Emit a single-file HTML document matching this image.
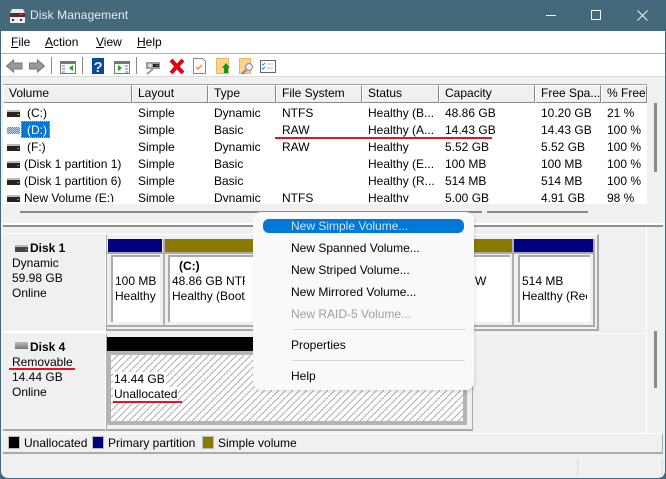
<!DOCTYPE html>
<html><head><meta charset="utf-8"><style>
html,body{margin:0;padding:0;width:666px;height:479px;overflow:hidden;background:#44697a}
*{box-sizing:border-box}
body{font:12px/15px "Liberation Sans",sans-serif;color:#000;position:relative}
.a{position:absolute}
.t{position:absolute;white-space:nowrap;line-height:15px;height:15px}
.h{position:absolute;top:85px;height:18px;background:#f0f0f0;border-left:1px solid #fff;border-right:1px solid #8a8a8a;border-bottom:1px solid #8a8a8a;border-top:1px solid #fff;padding-left:5px;line-height:15px;white-space:nowrap;overflow:hidden}
.red{position:absolute;height:2px;background:#e81123}
.ic{position:absolute;left:7px;width:13px;height:7px;background:linear-gradient(#bbb 0 2px,#2f2020 2px 7px)}
.ic:after{content:"";position:absolute;right:1px;top:4px;width:2px;height:1px;background:#2c2}
.m{position:absolute;left:291px;white-space:nowrap;line-height:15px}
.cell{position:absolute;top:255px;height:67px;background:#fff;border-left:2px solid #aaa;border-top:2px solid #aaa}
</style></head><body>
<div class="a" style="left:1px;top:31px;width:664px;height:447px;background:#f0f0f0;border-radius:0 0 7px 7px"></div>

<!-- title bar -->
<svg class="a" style="left:9px;top:8px" width="18" height="16" viewBox="0 0 18 16">
<path d="M3 1h11l2 4H1z" fill="#e8e8e8"/><rect x="1" y="5" width="15" height="4" fill="#4a3030"/><rect x="10" y="6" width="4" height="1" fill="#e33"/>
<rect x="1" y="9" width="15" height="6" fill="#eee"/><rect x="3" y="11" width="2" height="2" fill="#333"/><rect x="11" y="11" width="2" height="2" fill="#333"/></svg>
<div class="t" style="left:30px;top:8px;color:#dff0f6;font-size:12px;letter-spacing:.1px">Disk Management</div>
<svg class="a" style="left:540px;top:8px" width="118" height="16" fill="none" stroke="#f2f6f8" stroke-width="1">
<path d="M6 7.500h10"/><rect x="51.500" y="2.500" width="9" height="9"/><path d="M97.500 2.500l10 10M107.500 2.500l-10 10"/></svg>

<!-- menu -->
<div class="a" style="left:1px;top:31px;width:664px;height:23px;background:#fff;border-bottom:1px solid #b4b4b4"></div>
<div class="t" style="left:11px;top:35px"><u>F</u>ile</div>
<div class="t" style="left:45px;top:35px"><u>A</u>ction</div>
<div class="t" style="left:96px;top:35px"><u>V</u>iew</div>
<div class="t" style="left:137px;top:35px"><u>H</u>elp</div>

<!-- toolbar -->
<div class="a" style="left:1px;top:54px;width:664px;height:23px;background:#fff;border-bottom:1px solid #dcdcdc"></div>
<svg class="a" style="left:0;top:54px" width="290" height="22">
<path d="M6.500 12l7-6v3h8.500v6h-8.500v3z" fill="#999" stroke="#777"/>
<path d="M44.500 12l-7-6v3h-8v6h8v3z" fill="#999" stroke="#777"/>
<rect x="51" y="3" width="1" height="17" fill="#888"/>
<rect x="60.500" y="7.500" width="15" height="12" fill="#fff" stroke="#777"/><rect x="60" y="7" width="16" height="3" fill="#777"/>
<path d="M62 12h3M62 15h3M62 18h3" stroke="#38c"/><path d="M73 11v6l-4-3z" fill="#1a1"/>
<rect x="82" y="3" width="1" height="17" fill="#888"/>
<rect x="92" y="4" width="12" height="16" fill="#0a4a9a"/>
<text x="93.500" y="18" font-family="Liberation Sans" font-weight="bold" font-size="15" fill="#dfe8f5">?</text>
<rect x="114.500" y="7.500" width="15" height="12" fill="#fff" stroke="#777"/><rect x="114" y="7" width="16" height="3" fill="#777"/>
<path d="M118 11v6l4-3z" fill="#1a1"/><path d="M125 12h3M125 15h3M125 18h3" stroke="#38c"/>
<rect x="136" y="3" width="1" height="17" fill="#888"/>
<path d="M147 20l6-5" stroke="#999" stroke-width="2"/>
<rect x="146" y="8" width="14" height="7" fill="#999"/><rect x="153" y="10" width="6" height="3" fill="#222"/><rect x="156" y="11" width="2" height="1" fill="#2c2"/><circle cx="150" cy="11.500" r="2" fill="#cde"/>
<path d="M171 6l12 13M183 6l-12 13" stroke="#e00012" stroke-width="4"/>
<path d="M193.500 4.500h9l3 3v12h-12z" fill="#fff" stroke="#888"/><path d="M196 13l2 2 4-4" stroke="#f0932b" stroke-width="1.500" fill="none"/>
<rect x="216.500" y="4.500" width="12" height="15" fill="#fdd58a" stroke="#f0b060"/>
<path d="M226 9l4 5h-2v5h-4v-5h-2z" fill="#0a9a1e"/>
<rect x="239.500" y="4.500" width="11" height="15" fill="#fdd58a" stroke="#f0b060"/>
<circle cx="249" cy="13" r="3.500" fill="#e8eef4" stroke="#889"/><path d="M246 16l-4 4" stroke="#889" stroke-width="2"/>
<rect x="260.500" y="6.500" width="15" height="12" fill="#fff" stroke="#666"/><path d="M262 10l1 1 2-2M262 14l1 1 2-2" stroke="#28c" fill="none"/><path d="M267 10h6M267 14h6" stroke="#bbb"/>
</svg>

<!-- list -->
<div class="a" style="left:3px;top:84px;width:644px;height:120px;background:#fff"></div>
<div class="a" style="left:3px;top:84px;width:644px;height:1px;background:#a0a0a0"></div>
<div class="h" style="left:3px;width:129px">Volume</div>
<div class="h" style="left:132px;width:76px">Layout</div>
<div class="h" style="left:208px;width:68px">Type</div>
<div class="h" style="left:276px;width:86px">File System</div>
<div class="h" style="left:362px;width:77px">Status</div>
<div class="h" style="left:439px;width:96px">Capacity</div>
<div class="h" style="left:535px;width:66px">Free Spa...</div>
<div class="h" style="left:601px;width:46px">% Free</div>

<div class="a" style="left:3px;top:103px;width:644px;height:99px;overflow:hidden">
<div class="ic" style="top:7px;left:4px"></div>
<div style="position:absolute;left:4px;top:24px;width:13px;height:7px;background:repeating-conic-gradient(#3f8fd8 0 25%,#bcd8f0 0 50%) 0 0/2px 2px"></div>
<div class="ic" style="top:41px;left:4px"></div>
<div class="ic" style="top:58px;left:4px"></div>
<div class="ic" style="top:75px;left:4px"></div>
<div class="ic" style="top:92px;left:4px"></div>
<div class="a" style="left:18px;top:18px;width:29px;height:17px;background:#0078d7;outline:1px dotted #f5b048;outline-offset:-1px"></div>
<div class="t" style="left:24px;top:3px">(C:)</div>
<div class="t" style="left:24px;top:20px;color:#fff">(D:)</div>
<div class="t" style="left:24px;top:37px">(F:)</div>
<div class="t" style="left:21px;top:54px">(Disk 1 partition 1)</div>
<div class="t" style="left:21px;top:71px">(Disk 1 partition 6)</div>
<div class="t" style="left:21px;top:88px">New Volume (E:)</div>

<div class="t" style="left:135px;top:3px">Simple</div><div class="t" style="left:211px;top:3px">Dynamic</div><div class="t" style="left:279px;top:3px">NTFS</div><div class="t" style="left:365px;top:3px">Healthy (B...</div><div class="t" style="left:442px;top:3px">48.86 GB</div><div class="t" style="left:538px;top:3px">10.20 GB</div><div class="t" style="left:604px;top:3px">21 %</div>
<div class="t" style="left:135px;top:20px">Simple</div><div class="t" style="left:211px;top:20px">Basic</div><div class="t" style="left:279px;top:20px">RAW</div><div class="t" style="left:365px;top:20px">Healthy (A...</div><div class="t" style="left:442px;top:20px">14.43 GB</div><div class="t" style="left:538px;top:20px">14.43 GB</div><div class="t" style="left:604px;top:20px">100 %</div>
<div class="t" style="left:135px;top:37px">Simple</div><div class="t" style="left:211px;top:37px">Dynamic</div><div class="t" style="left:279px;top:37px">RAW</div><div class="t" style="left:365px;top:37px">Healthy</div><div class="t" style="left:442px;top:37px">5.52 GB</div><div class="t" style="left:538px;top:37px">5.52 GB</div><div class="t" style="left:604px;top:37px">100 %</div>
<div class="t" style="left:135px;top:54px">Simple</div><div class="t" style="left:211px;top:54px">Basic</div><div class="t" style="left:365px;top:54px">Healthy (E...</div><div class="t" style="left:442px;top:54px">100 MB</div><div class="t" style="left:538px;top:54px">100 MB</div><div class="t" style="left:604px;top:54px">100 %</div>
<div class="t" style="left:135px;top:71px">Simple</div><div class="t" style="left:211px;top:71px">Basic</div><div class="t" style="left:365px;top:71px">Healthy (R...</div><div class="t" style="left:442px;top:71px">514 MB</div><div class="t" style="left:538px;top:71px">514 MB</div><div class="t" style="left:604px;top:71px">100 %</div>
<div class="t" style="left:135px;top:88px">Simple</div><div class="t" style="left:211px;top:88px">Dynamic</div><div class="t" style="left:279px;top:88px">NTFS</div><div class="t" style="left:365px;top:88px">Healthy</div><div class="t" style="left:442px;top:88px">5.00 GB</div><div class="t" style="left:538px;top:88px">4.91 GB</div><div class="t" style="left:604px;top:88px">98 %</div>
</div>
<div class="red" style="left:275px;top:137px;width:217px"></div>

<!-- scrollbars -->
<div class="a" style="left:654px;top:103px;width:3px;height:69px;background:#8a8a8a"></div>
<div class="a" style="left:20px;top:211px;width:462px;height:2px;background:#8a8a8a"></div>
<div class="a" style="left:487px;top:211px;width:101px;height:2px;background:#8a8a8a"></div>

<!-- splitter -->
<div class="a" style="left:3px;top:223px;width:660px;height:4px;background:#fff;border-bottom:2px solid #8f8f8f"></div>

<!-- lower pane lines -->
<div class="a" style="left:646px;top:228px;width:1px;height:205px;background:#fff"></div>
<div class="a" style="left:473px;top:333px;width:173px;height:1px;background:#fff"></div>
<div class="a" style="left:654px;top:331px;width:3px;height:57px;background:#8a8a8a"></div>

<!-- Disk 1 -->
<div class="a" style="left:3px;top:233px;width:103px;height:99px;background:#f0f0f0;border-top:1px solid #fff;border-bottom:1px solid #fff;border-right:1px solid #fff"></div>
<div class="ic" style="left:15px;top:245px;background:linear-gradient(#bbb 0 2px,#444 2px 7px)"></div>
<div class="t" style="left:30px;top:241px;font-weight:bold">Disk 1</div>
<div class="t" style="left:12px;top:256px">Dynamic</div>
<div class="t" style="left:12px;top:271px">59.98 GB</div>
<div class="t" style="left:12px;top:286px">Online</div>

<!-- Disk 1 partitions -->
<div class="a" style="left:106px;top:234px;width:493px;height:97px;background:#f0f0f0;border-top:1px solid #fff;border-left:1px solid #aaa;border-right:2px solid #aaa;border-bottom:2px solid #aaa"></div>
<div class="a" style="left:108px;top:239px;width:54px;height:13px;background:#000080"></div>
<div class="a" style="left:165px;top:239px;width:348px;height:13px;background:#8b7a00"></div>
<div class="a" style="left:514px;top:239px;width:79px;height:13px;background:#000080"></div>
<div class="a" style="left:107px;top:252px;width:488px;height:2px;background:#aaa"></div>
<div class="a" style="left:107px;top:325px;width:488px;height:2px;background:#aaa"></div>
<div class="a" style="left:163px;top:239px;width:2px;height:87px;background:#b0b0b0"></div>
<div class="a" style="left:512px;top:239px;width:2px;height:87px;background:#b0b0b0"></div>
<div class="a" style="left:593px;top:239px;width:2px;height:87px;background:#aaa"></div>
<div class="cell" style="left:111px;width:49px"></div>
<div class="cell" style="left:168px;width:342px"></div>
<div class="cell" style="left:518px;width:72px"></div>
<div class="t" style="left:115px;top:274px">100 MB</div>
<div class="t" style="left:115px;top:289px;width:41px;overflow:hidden">Healthy</div>
<div class="t" style="left:179px;top:259px;font-weight:bold">(C:)</div>
<div class="t" style="left:172px;top:274px;width:73px;overflow:hidden">48.86 GB NTFS</div>
<div class="t" style="left:172px;top:289px;width:73px;overflow:hidden">Healthy (Boot</div>
<div class="t" style="left:475px;top:274px">W</div>
<div class="t" style="left:522px;top:274px">514 MB</div>
<div class="t" style="left:522px;top:289px;width:65px;overflow:hidden">Healthy (Rec</div>

<!-- Disk 4 -->
<div class="a" style="left:3px;top:332px;width:103px;height:99px;background:#f0f0f0;border-top:1px solid #fff;border-right:1px solid #fff;border-bottom:2px solid #aaa"></div>
<div class="a" style="left:15px;top:342px;width:13px;height:7px;background:linear-gradient(#bbb,#777)"></div>
<div class="t" style="left:30px;top:340px;font-weight:bold">Disk 4</div>
<div class="t" style="left:12px;top:355px">Removable</div>
<div class="red" style="left:9px;top:368px;width:66px"></div>
<div class="t" style="left:12px;top:370px">14.44 GB</div>
<div class="t" style="left:12px;top:385px">Online</div>

<div class="a" style="left:106px;top:334px;width:367px;height:97px;background:#f0f0f0;border-left:1px solid #aaa;border-right:1px solid #aaa;border-bottom:2px solid #aaa"></div>
<div class="a" style="left:107px;top:337px;width:360px;height:14px;background:#000"></div>
<div class="a" style="left:106px;top:351px;width:361px;height:74px;background:#fff;border:solid #b4b4b4;border-width:4px 4px 4px 5px;overflow:hidden">
<svg width="352" height="66" style="position:absolute;left:0;top:0"><defs><pattern id="p" width="7" height="7" patternUnits="userSpaceOnUse"><path d="M-1 8L8 -1" stroke="#aaa" stroke-width="1"/></pattern></defs><rect width="352" height="66" fill="url(#p)"/></svg></div>
<div class="t" style="left:113px;top:372px;background:#fff;padding:0 1px">14.44 GB</div>
<div class="t" style="left:113px;top:387px;background:#fff;padding:0 1px">Unallocated</div>
<div class="red" style="left:113px;top:401px;width:69px"></div>

<!-- legend -->
<div class="a" style="left:3px;top:433px;width:660px;height:21px;background:#f0f0f0;border-top:1px solid #fff;border-bottom:2px solid #aaa;border-right:1px solid #aaa"></div>
<div class="a" style="left:8px;top:436px;width:12px;height:13px;background:#000;border:1px solid #bbb"></div>
<div class="t" style="left:24px;top:436px">Unallocated</div>
<div class="a" style="left:92px;top:436px;width:12px;height:13px;background:#000080;border:1px solid #bbb"></div>
<div class="t" style="left:108px;top:436px">Primary partition</div>
<div class="a" style="left:202px;top:436px;width:12px;height:13px;background:#8b7a00;border:1px solid #bbb"></div>
<div class="t" style="left:218px;top:436px">Simple volume</div>
<div class="a" style="left:577px;top:457px;width:1px;height:20px;background:#dcdcdc"></div>
<div class="a" style="left:662px;top:457px;width:1px;height:20px;background:#dcdcdc"></div>

<!-- context menu -->
<div class="a" style="left:253px;top:212px;width:221px;height:178px;background:#f9f9f9;border-radius:8px;box-shadow:1px 2px 3px rgba(0,0,0,.12)"></div>
<div class="a" style="left:263px;top:219px;width:201px;height:14px;background:#0078d7;border-radius:6px"></div>
<div class="m" style="top:219px;color:#cfe6f7">New Simple Volume...</div>
<div class="m" style="top:241px">New Spanned Volume...</div>
<div class="m" style="top:263px">New Striped Volume...</div>
<div class="m" style="top:285px">New Mirrored Volume...</div>
<div class="m" style="top:307px;color:#a0a0a0">New RAID-5 Volume...</div>
<div class="a" style="left:293px;top:329px;width:172px;height:1px;background:#d4d4d4"></div>
<div class="m" style="top:338px">Properties</div>
<div class="a" style="left:293px;top:360px;width:172px;height:1px;background:#d4d4d4"></div>
<div class="m" style="top:369px">Help</div>
</body></html>
